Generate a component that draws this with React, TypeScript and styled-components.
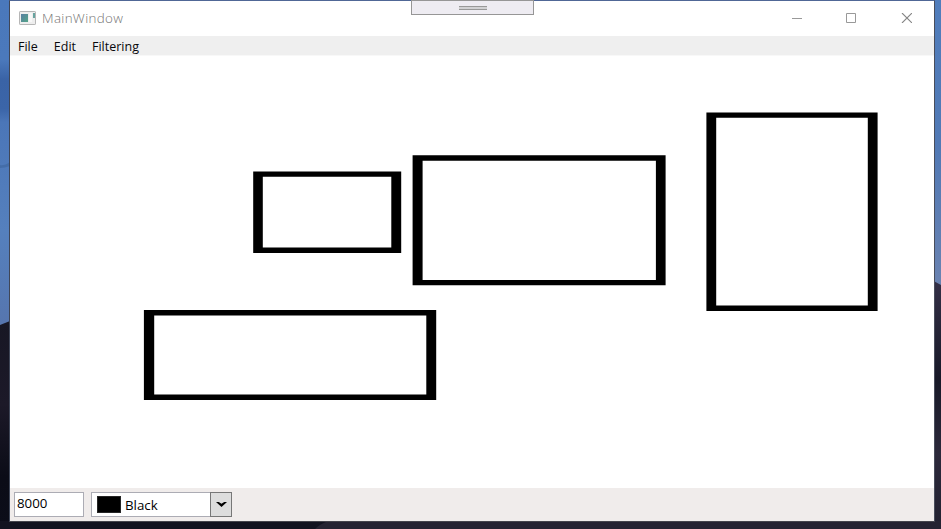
import React from "react";
import styled, { createGlobalStyle } from "styled-components";

const GlobalStyle = createGlobalStyle`
  * { box-sizing: border-box; }
  body { margin: 0; overflow: hidden; }
`;

const Desktop = styled.div`
  position: relative;
  width: 941px;
  height: 529px;
  padding: 0 6px 7px 9px;
  background: #161522;
  font-family: "Open Sans", "Noto Sans", sans-serif;
  color: #000;
`;

const Wallpaper = styled.svg`
  position: absolute;
  inset: 0;
`;

const Window = styled.main`
  position: relative;
  display: flex;
  flex-direction: column;
  width: 926px;
  height: 522px;
  border: 1px solid;
  border-color: #506796 #494d5b #45454d #3f4657;
  background: #fff;
`;

const TitleBar = styled.header`
  display: flex;
  align-items: center;
  height: 35px;
  flex: none;
  padding: 0 0 2px 9px;
`;

const Title = styled.span`
  margin-left: 6px;
  flex: 1;
  font-size: 13.4px;
  font-weight: 300;
  line-height: 20px;
  letter-spacing: 0.32px;
  color: #757575;
`;

const CaptionButton = styled.button<{ $width: number }>`
  display: flex;
  align-items: center;
  justify-content: center;
  width: ${(p) => p.$width}px;
  height: 33px;
  padding: 0;
  border: 0;
  background: none;
`;

const DebugHandle = styled.div`
  position: absolute;
  top: -1px;
  left: 401px;
  display: flex;
  justify-content: center;
  width: 123px;
  height: 15px;
  padding-top: 5px;
  border: 1px solid #969696;
  background: #eeecf2;
`;

const Grip = styled.div`
  width: 28px;
  height: 4px;
  border: solid #999;
  border-width: 1px 0;
  background: #d2d2d4;
`;

const MenuBar = styled.nav`
  display: flex;
  flex: none;
  height: 19px;
  padding-left: 8px;
  gap: 16px;
  background: #efefef;
`;

const MenuItem = styled.span`
  font-size: 12.5px;
  line-height: 22px;
  color: #08080c;
`;

const Canvas = styled.svg`
  display: block;
  flex: none;
  width: 924px;
  height: 433px;
`;

const Footer = styled.footer`
  display: flex;
  flex: 1;
  gap: 7px;
  padding: 4px 0 0 4px;
  background: #f0eceb;
`;

const NumberBox = styled.div`
  width: 70px;
  height: 25px;
  padding-left: 2px;
  border: 1px solid #acacb4;
  background: #fff;
  font-size: 13.3px;
  line-height: 21px;
`;

const ColorSelect = styled.div`
  display: flex;
  align-items: center;
  width: 141px;
  height: 25px;
  border: 1px solid #acacb4;
  border-right: 0;
  background: #fff;
`;

const Swatch = styled.span`
  width: 24px;
  height: 17px;
  margin: 0 4px 0 5px;
  border: 1px solid #252525;
  background: #000;
`;

const ColorName = styled.span`
  flex: 1;
  font-size: 13.3px;
  line-height: 22px;
`;

const DropButton = styled.span`
  display: flex;
  align-items: center;
  justify-content: center;
  width: 22px;
  height: 25px;
  border: 1px solid #777;
  background: #ddd;
`;

type Box = [number, number, number, number];

/* Each frame is an outer box and the hole inside it: left, top, right, bottom. */
const frames: { outer: Box; inner: Box }[] = [
  { outer: [253.2, 171.4, 401.2, 253], inner: [262.8, 176.8, 391.3, 247.5] },
  { outer: [412.6, 155.3, 665.6, 285.2], inner: [422.6, 160.8, 655.9, 279.9] },
  { outer: [706.4, 112.4, 877.6, 311], inner: [716.2, 117.8, 867.8, 305.4] },
  { outer: [143.9, 309.9, 436.2, 400], inner: [154.2, 315.5, 426.3, 394.5] },
];

const boxPath = ([l, t, r, b]: Box) => `M${l} ${t}H${r}V${b}H${l}Z`;

export default function App() {
  return (
    <>
      <GlobalStyle />
      <Desktop>
        <Wallpaper width="941" height="529" viewBox="0 0 941 529">
          <defs>
            <linearGradient id="skyLeft" x1="0" y1="0" x2="0" y2="1">
              <stop offset="0" stopColor="#4a78bb" />
              <stop offset="0.18" stopColor="#4b79bc" />
              <stop offset="0.24" stopColor="#3a63a6" />
              <stop offset="0.33" stopColor="#3b65a8" />
              <stop offset="0.37" stopColor="#4b76b8" />
              <stop offset="0.7" stopColor="#5580bd" />
              <stop offset="1" stopColor="#5675ae" />
            </linearGradient>
            <linearGradient id="skyRight" x1="0" y1="0" x2="0" y2="1">
              <stop offset="0" stopColor="#507dbc" />
              <stop offset="0.5" stopColor="#5179b5" />
              <stop offset="1" stopColor="#6b83b1" />
            </linearGradient>
            <linearGradient id="hillLeft" x1="0" y1="0" x2="0" y2="1">
              <stop offset="0" stopColor="#171724" />
              <stop offset="0.4" stopColor="#1c1928" />
              <stop offset="0.75" stopColor="#0b0c17" />
              <stop offset="1" stopColor="#0c0d19" />
            </linearGradient>
            <linearGradient id="hillRight" x1="0" y1="0" x2="0" y2="1">
              <stop offset="0" stopColor="#343047" />
              <stop offset="0.4" stopColor="#181928" />
              <stop offset="0.7" stopColor="#2c293b" />
              <stop offset="1" stopColor="#222130" />
            </linearGradient>
          </defs>
          <path d="M0 0H20V330H0Z" fill="url(#skyLeft)" />
          <path d="M0 165Q4 166 10 162V166Q4 168 0 168Z" fill="#446da8" />
          <path d="M930 0H941V290H930Z" fill="url(#skyRight)" />
          <path d="M0 325L10 321V529H0Z" fill="url(#hillLeft)" />
          <path d="M930 279L941 285V529H930Z" fill="url(#hillRight)" />
          <path d="M0 521H340V529H0Z" fill="#121320" />
          <path d="M328 521H941V529H315Q320 524 328 521Z" fill="#252332" />
        </Wallpaper>
        <Window>
          <TitleBar>
            <svg width="17" height="14" viewBox="0 0 17 14">
              <defs>
                <linearGradient id="appIcon" x1="0" y1="0" x2="1" y2="1">
                  <stop offset="0" stopColor="#587fa2" />
                  <stop offset="1" stopColor="#54a488" />
                </linearGradient>
              </defs>
              <rect x="0.5" y="0.5" width="16" height="13" rx="0.6" fill="#eee" stroke="#b6b6b6" />
              <path d="M2 3H9V11H2Z" fill="url(#appIcon)" />
              <path d="M10 2H13V11H10Z" fill="#f8f8f8" />
              <path d="M14 2H16V7H14Z" fill="#67a4a0" />
            </svg>
            <Title>MainWindow</Title>
            <CaptionButton $width={54} aria-label="Minimize">
              <svg width="10" height="10" viewBox="0 0 10 10"><path d="M0 5.5H10" stroke="#999" /></svg>
            </CaptionButton>
            <CaptionButton $width={54} aria-label="Maximize">
              <svg width="10" height="10" viewBox="0 0 10 10"><path d="M.5.5H9.5V9.5H.5Z" fill="none" stroke="#999" /></svg>
            </CaptionButton>
            <CaptionButton $width={56} aria-label="Close">
              <svg width="12" height="10" viewBox="0 0 12 10"><path d="M2 0L12 10M12 0L2 10" stroke="#858585" strokeWidth="1.1" /></svg>
            </CaptionButton>
          </TitleBar>
          <MenuBar>
            <MenuItem>File</MenuItem>
            <MenuItem>Edit</MenuItem>
            <MenuItem>Filtering</MenuItem>
          </MenuBar>
          <Canvas viewBox="10 55 924 433">
            <path d="M10 55H934V56H10Z" fill="#f8f8f8" />
            {frames.map((f, i) => (
              <path key={i} d={boxPath(f.outer) + boxPath(f.inner)} fillRule="evenodd" />
            ))}
          </Canvas>
          <Footer>
            <NumberBox>8000</NumberBox>
            <ColorSelect>
              <Swatch />
              <ColorName>Black</ColorName>
              <DropButton>
                <svg width="11" height="7" viewBox="0 0 11 7"><path d="M0 1H2.8L5.5 2.8L8.2 1H11L5.5 6Z" /></svg>
              </DropButton>
            </ColorSelect>
          </Footer>
          <DebugHandle><Grip /></DebugHandle>
        </Window>
      </Desktop>
    </>
  );
}
